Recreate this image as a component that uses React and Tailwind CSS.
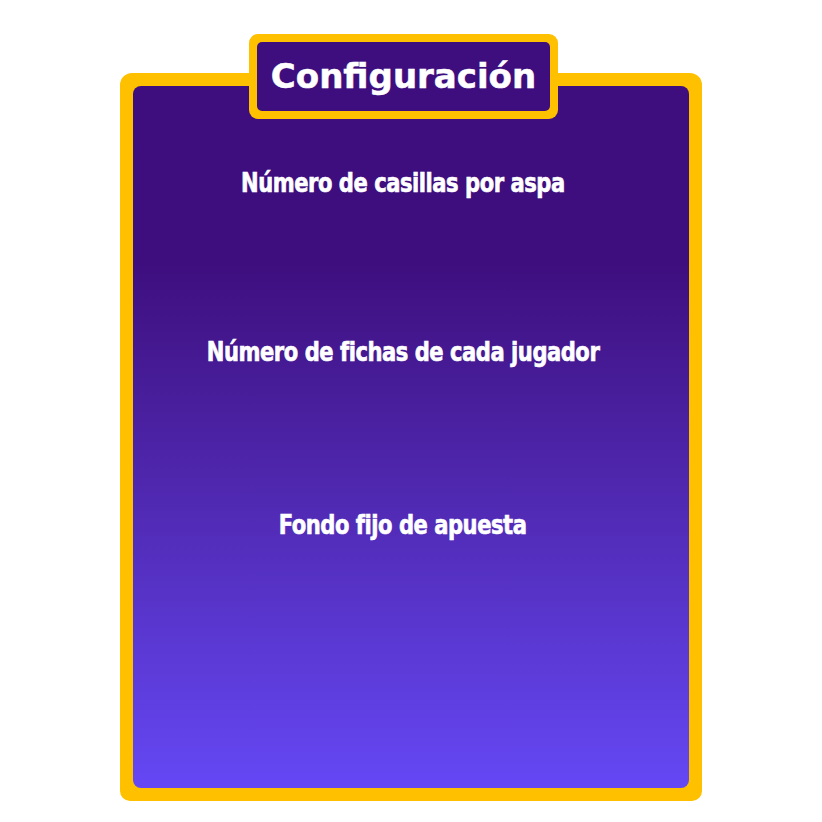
import React from "react";

const labels = [
    { text: "Número de casillas por aspa", className: "mt-[82px]" },
    { text: "Número de fichas de cada jugador", className: "mt-[139px]" },
    { text: "Fondo fijo de apuesta", className: "mt-[143px]" },
];

const App = () => {
    return (
        <div className="w-[822px] h-[822px] bg-white relative">
            {/* Card */}
            <div className="absolute left-[120px] top-[73px] w-[582px] h-[728px] bg-[#ffc000] rounded-t-[12px] rounded-b-[10px] p-[13px]">
                <div className="w-full h-full rounded-[8px] bg-linear-to-b from-[#3e0e7e] from-25% to-[#6548f5] flex flex-col items-center pr-4">
                    {labels.map((l) => (
                        <div
                            key={l.text}
                            className={`${l.className} h-[30px] leading-[30px] text-white font-bold text-[26px] tracking-[-0.5px] scale-x-[0.9] [-webkit-text-stroke:0.6px_white] whitespace-nowrap`}
                            style={{ fontFamily: '"DejaVu Sans Condensed", "DejaVu Sans", sans-serif' }}
                        >
                            {l.text}
                        </div>
                    ))}
                </div>
            </div>

            {/* Title tab */}
            <div className="absolute left-[249px] top-[34px] w-[309px] h-[85px] bg-[#ffc000] rounded-[9px] p-[8px]">
                <div className="w-full h-full bg-[#3e0e7e] rounded-[5px] flex items-center justify-center">
                    <span
                        className="text-white font-bold text-[34px] leading-none pb-[2px] [-webkit-text-stroke:0.5px_white]"
                        style={{ fontFamily: '"DejaVu Sans", Verdana, sans-serif' }}
                    >
                        Configuración
                    </span>
                </div>
            </div>
        </div>
    );
};

export default App;
